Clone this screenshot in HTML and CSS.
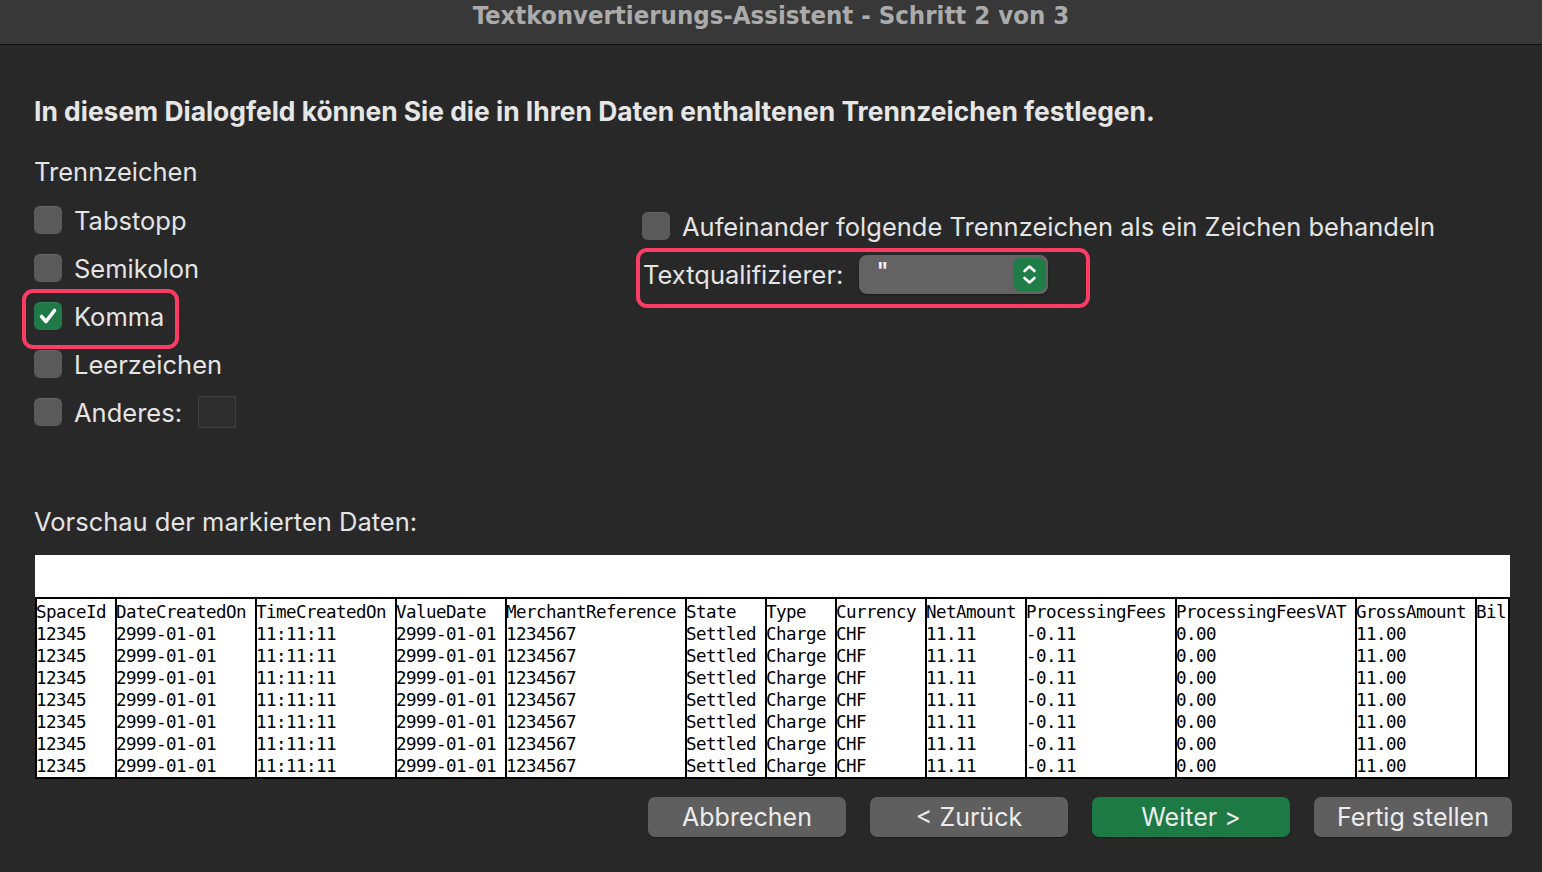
FILE: index.html
```html
<!DOCTYPE html>
<html lang="de">
  <head>
    <meta charset="UTF-8" />
    <meta name="viewport" content="width=device-width, initial-scale=1.0" />
    <title>Textkonvertierungs-Assistent</title>
    <link rel="stylesheet" href="styles.css">
  </head>
  <body>
    <div class="titlebar">
      <span class="title">Textkonvertierungs-Assistent - Schritt 2 von 3</span>
    </div>

    <div class="content">
      <h1 class="intro">In diesem Dialogfeld können Sie die in Ihren Daten enthaltenen Trennzeichen festlegen.</h1>

      <div class="section-label">Trennzeichen</div>

      <div class="options">
        <div class="options-left">
          <div class="option">
            <span class="checkbox"></span>
            <span class="option-label">Tabstopp</span>
          </div>
          <div class="option">
            <span class="checkbox"></span>
            <span class="option-label">Semikolon</span>
          </div>
          <div class="option highlight highlight-komma">
            <span class="checkbox checked">
              <svg viewBox="0 0 28 28" width="28" height="28"><path d="M7.5 14.5 L12 19.5 L20.5 8.5" fill="none" stroke="#fff" stroke-width="3.6" stroke-linecap="round" stroke-linejoin="round"/></svg>
            </span>
            <span class="option-label">Komma</span>
          </div>
          <div class="option">
            <span class="checkbox"></span>
            <span class="option-label">Leerzeichen</span>
          </div>
          <div class="option">
            <span class="checkbox"></span>
            <span class="option-label">Anderes:</span>
            <span class="other-input"></span>
          </div>
        </div>

        <div class="options-right">
          <div class="option">
            <span class="checkbox"></span>
            <span class="option-label">Aufeinander folgende Trennzeichen als ein Zeichen behandeln</span>
          </div>
          <div class="option highlight highlight-qualifier">
            <span class="option-label qualifier-label">Textqualifizierer:</span>
            <div class="select">
              <span class="select-value">"</span>
              <span class="stepper">
                <svg viewBox="0 0 33 33" width="33" height="33"><path d="M11.5 13 L16.5 8.5 L21.5 13 M11.5 20 L16.5 24.5 L21.5 20" fill="none" stroke="#fff" stroke-width="2.6" stroke-linecap="round" stroke-linejoin="round"/></svg>
              </span>
            </div>
          </div>
        </div>
      </div>

      <div class="section-label preview-label">Vorschau der markierten Daten:</div>

      <div class="preview">
        <div class="preview-table" id="preview-table"></div>
      </div>

      <div class="buttons">
        <button class="btn">Abbrechen</button>
        <button class="btn">&lt; Zurück</button>
        <button class="btn btn-primary">Weiter &gt;</button>
        <button class="btn">Fertig stellen</button>
      </div>
    </div>

    <script>
      const columns = [
        { name: "SpaceId", value: "12345", width: 80 },
        { name: "DateCreatedOn", value: "2999-01-01", width: 140 },
        { name: "TimeCreatedOn", value: "11:11:11", width: 140 },
        { name: "ValueDate", value: "2999-01-01", width: 110 },
        { name: "MerchantReference", value: "1234567", width: 180 },
        { name: "State", value: "Settled", width: 80 },
        { name: "Type", value: "Charge", width: 70 },
        { name: "Currency", value: "CHF", width: 90 },
        { name: "NetAmount", value: "11.11", width: 100 },
        { name: "ProcessingFees", value: "-0.11", width: 150 },
        { name: "ProcessingFeesVAT", value: "0.00", width: 180 },
        { name: "GrossAmount", value: "11.00", width: 120 },
        { name: "Bil", value: "", width: 33 }
      ];
      const rowCount = 7;
      const table = document.getElementById("preview-table");

      columns.forEach((col) => {
        const column = document.createElement("div");
        column.classList.add("preview-col");
        column.style.width = col.width + "px";

        let html = `<div class="cell">${col.name}</div>`;
        for (let i = 0; i < rowCount; i++) {
          html += `<div class="cell">${col.value}</div>`;
        }
        column.innerHTML = html;
        table.appendChild(column);
      });
    </script>
  </body>
</html>
```

FILE: styles.css
```css
body {
  margin: 0;
  padding: 0;
  width: 1542px;
  height: 872px;
  overflow: hidden;
  background-color: #282828;
  color: #e4e4e4;
  font-family: Inter, "Noto Sans", sans-serif;
}

.titlebar {
  height: 44px;
  background-color: #383838;
  border-bottom: 1px solid #0e0e0e;
  text-align: center;
  overflow: hidden;
}

.title {
  display: inline-block;
  font-family: "DejaVu Sans Condensed", "DejaVu Sans", sans-serif;
  font-weight: bold;
  font-size: 25.5px;
  line-height: 30px;
  color: #ababab;
}

.content {
  padding: 0 30px 0 34px;
}

.intro {
  margin: 50px 0 0 0;
  font-size: 26.4px;
  line-height: 32px;
  font-weight: 700;
  color: #e6e6e6;
}

.section-label {
  margin-top: 30px;
  font-size: 25.5px;
  line-height: 30px;
}

.options {
  display: flex;
  margin-top: 9px;
}

.options-left {
  width: 608px;
}

.options-right {
  margin-top: 6px;
}

.option {
  display: flex;
  align-items: center;
  height: 48px;
  font-size: 25.5px;
}

.checkbox {
  width: 28px;
  height: 28px;
  border-radius: 6px;
  background-color: #5a5a5a;
  box-shadow: inset 0 1px 0 rgba(255, 255, 255, 0.08);
  margin-right: 12px;
  flex-shrink: 0;
}

.checkbox.checked {
  background-color: #1f7a47;
}

.checkbox svg {
  display: block;
}

.other-input {
  width: 36px;
  height: 30px;
  margin-left: 16px;
  background-color: #2d2d2d;
  border: 1px solid #3e3e3e;
}

.highlight {
  position: relative;
}

.highlight::after {
  content: "";
  position: absolute;
  box-sizing: border-box;
  border: 4px solid #fd3c66;
  border-radius: 11px;
}

.highlight-komma::after {
  top: -3px;
  left: -12px;
  width: 157px;
  height: 60px;
}

.highlight-qualifier::after {
  top: -2px;
  left: -6px;
  width: 454px;
  height: 60px;
}

.qualifier-label {
  margin-left: 1px;
}

.select {
  display: flex;
  justify-content: space-between;
  width: 189px;
  height: 39px;
  margin-left: 16px;
  box-sizing: border-box;
  padding: 3px 2px 3px 17px;
  border-radius: 8px;
  background-color: #636363;
  box-shadow: 0 1px 2px rgba(0, 0, 0, 0.4);
}

.select-value {
  font-size: 23px;
  line-height: 26px;
  font-weight: 600;
  color: #eeeeee;
}

.stepper {
  width: 33px;
  height: 33px;
  border-radius: 7px;
  background-color: #1f7d48;
}

.stepper svg {
  display: block;
}

.preview-label {
  margin-top: 71px;
}

.preview {
  width: 1475px;
  margin: 18px 0 0 1px;
  padding-top: 42px;
  background-color: #fff;
}

.preview-table {
  display: flex;
  border: 2px solid #000;
  border-left-width: 0;
  font-family: "DejaVu Sans Mono", "Liberation Mono", monospace;
  font-size: 17.5px;
  letter-spacing: -0.53px;
  line-height: 22px;
  color: #000;
}

.preview-col {
  box-sizing: border-box;
  padding-top: 2px;
  border-left: 2px solid #000;
  overflow: hidden;
  white-space: nowrap;
}

.cell {
  height: 22px;
  margin-left: -1px;
}

.buttons {
  display: flex;
  justify-content: flex-end;
  gap: 24px;
  margin-top: 18px;
}

.btn {
  width: 198px;
  height: 40px;
  padding: 0;
  border: none;
  border-radius: 7px;
  background-color: #5f5f5f;
  color: #ececec;
  font-family: Inter, "Noto Sans", sans-serif;
  font-size: 25px;
  box-shadow: 0 1px 1px rgba(0, 0, 0, 0.35);
}

.btn-primary {
  background-color: #1d7a45;
}
```
